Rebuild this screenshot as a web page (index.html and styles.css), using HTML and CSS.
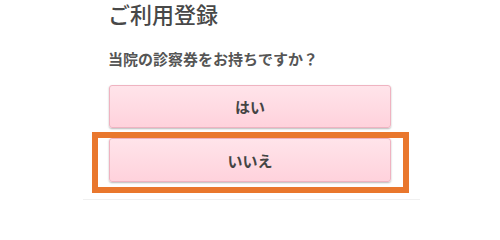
FILE: index.html
```html
<!DOCTYPE html>
<html lang="ja">
<head>
<meta charset="utf-8">
<link rel="stylesheet" href="styles.css">
</head>
<body>
<div class="page">
  <h1 class="title">ご利用登録</h1>
  <p class="question">当院の診察券をお持ちですか？</p>
  <div class="choices">
    <button class="btn btn-yes">はい</button>
    <button class="btn btn-no">いいえ</button>
    <div class="highlight"></div>
  </div>
  <div class="rule"></div>
</div>
</body>
</html>
```
FILE: styles.css
```css
* { box-sizing: border-box; }
html, body {
  margin: 0;
  padding: 0;
  background: #ffffff;
  width: 500px;
  height: 200px;
  overflow: hidden;
}
body {
  font-family: "Noto Sans CJK JP", "Noto Sans", sans-serif;
  color: #444;
}
.page {
  position: relative;
  padding: 1px 0 0 108px;
}
.title {
  margin: 0;
  font-size: 22px;
  line-height: 24px;
  font-weight: 500;
  color: #484848;
}
.question {
  margin: 24px 0 0;
  font-size: 15px;
  line-height: 20px;
  font-weight: 700;
  color: #555;
}
.choices {
  position: relative;
  margin-top: 16px;
  width: 283px;
  padding-left: 1px;
}
.btn {
  display: block;
  width: 282px;
  border: 1px solid #efb3c1;
  border-radius: 3px;
  background: linear-gradient(#ffe4ea, #ffd2dc);
  box-shadow: 0 1px 2px rgba(0, 0, 0, 0.28);
  font-family: inherit;
  font-size: 15px;
  font-weight: 700;
  color: #444;
  padding: 0;
}
.btn-yes { height: 43px; }
.btn-no { height: 44px; margin-top: 10px; }
.highlight {
  position: absolute;
  left: -16px;
  top: 47px;
  width: 317px;
  height: 61px;
  border: 6px solid #e9772d;
  pointer-events: none;
}
.rule {
  margin: 17px 0 0 -25px;
  width: 337px;
  border-top: 1px solid #f0f0f0;
}
```
